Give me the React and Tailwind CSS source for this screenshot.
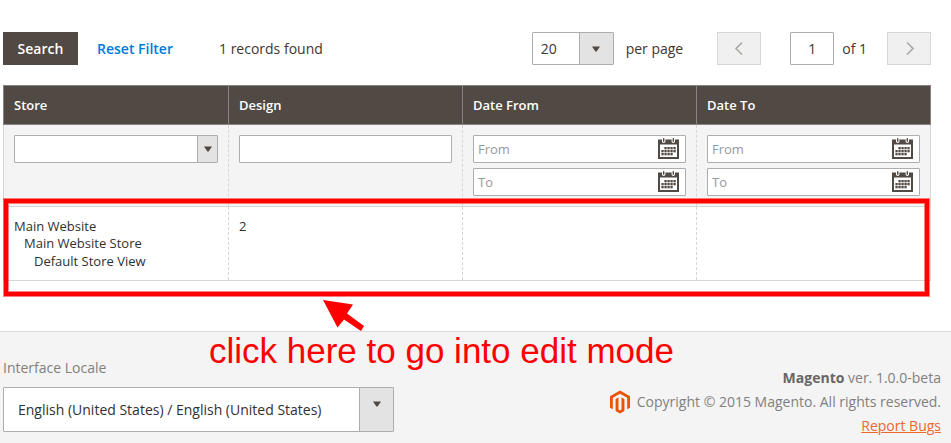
import React from "react";

const inputClass =
  "block h-7 w-full rounded-[1px] border border-[#adadad] bg-white px-1 text-[13px] text-[#303030] placeholder:text-[#999] outline-none";

function Triangle() {
  return (
    <svg className="h-[6px] w-2" viewBox="0 0 8 6" aria-hidden="true">
      <path d="M0 0.5h8L4.6 5.6H3.4z" fill="#514943" />
    </svg>
  );
}

function CalendarIcon() {
  const dots = [];
  for (let row = 0; row < 3; row++) {
    for (let col = 0; col < 5; col++) {
      if ((row === 0 && col === 0) || (row === 2 && col === 4)) continue;
      dots.push(<rect key={row + "-" + col} x={3.4 + col * 3} y={9 + row * 3} width="2.3" height="2.3" />);
    }
  }
  return (
    <svg className="h-[21px] w-[21px]" viewBox="0 0 21 21" fill="#514943" aria-hidden="true">
      <path fillRule="evenodd" d="M0 1.5h21V21H0zM2 6.5V19h17V6.5z" />
      <rect x="4" y="0" width="3.4" height="5" rx="1.7" fill="#fff" />
      <rect x="13.6" y="0" width="3.4" height="5" rx="1.7" fill="#fff" />
      <rect x="5" y="0" width="1.4" height="4" rx="0.7" />
      <rect x="14.6" y="0" width="1.4" height="4" rx="0.7" />
      {dots}
    </svg>
  );
}

function DateField({ label, name }) {
  return (
    <div className="relative">
      <input type="text" placeholder={label} aria-label={name + " " + label} className={inputClass} />
      <button type="button" aria-label={"Pick " + name + " " + label} className="absolute right-[7px] top-[3px]">
        <CalendarIcon />
      </button>
    </div>
  );
}

function Chevron({ d }) {
  return (
    <svg className="h-4 w-4" viewBox="0 0 16 16" fill="none" stroke="#aaa6a2" strokeWidth="1.6" aria-hidden="true">
      <path d={d} />
    </svg>
  );
}

function MagentoLogo() {
  return (
    <svg className="h-6 w-5 shrink-0" viewBox="0 0 20 24" fill="#eb5202" aria-hidden="true">
      <path d="M10 0.5 20 6.2v11.5l-2.8 1.6V7.8L10 3.7 2.8 7.8v11.5L0 17.7V6.2z" />
      <path d="M5.6 9.1 8.5 7.5v12L10 20.4l1.5-0.9v-12l2.9 1.6v11.8L10 23.5l-4.4-2.6z" />
    </svg>
  );
}

const headClass = "h-[39px] border border-[#8a837f] bg-[#514943] px-[10px] text-left font-semibold text-white";
const filterClass =
  "border-x border-dashed border-[#d6d6d6] bg-[#f4f4f4] p-[10px] align-top first:[border-left-style:solid] last:[border-right-style:solid]";
const cellClass =
  "h-[74px] border border-[#d6d6d6] [border-left-style:dashed] [border-right-style:dashed] px-[10px] pt-[10px] align-top first:[border-left-style:solid] last:[border-right-style:solid]";

export default function App() {
  return (
    <div className="flex min-h-screen flex-col bg-white font-['Open_Sans','Noto_Sans',sans-serif] text-sm text-[#41362f]">
      <main className="pb-[50px] pl-[3px] pr-5 pt-8">
        <div className="mb-5 flex h-[33px] items-center justify-between">
          <div className="flex items-center">
            <button type="button" className="h-[33px] w-[75px] bg-[#514943] font-semibold text-white">
              Search
            </button>
            <button type="button" className="ml-[19px] font-semibold text-[#007bdb]">
              Reset Filter
            </button>
            <span className="ml-[46px]">1 records found</span>
          </div>
          <div className="flex items-center">
            <div className="relative">
              <select
                id="limit"
                className="block h-[33px] w-[82px] appearance-none rounded-[1px] border border-[#adadad] bg-white pl-2 outline-none"
              >
                <option>20</option>
              </select>
              <span className="pointer-events-none absolute inset-y-px right-px flex w-[34px] items-center justify-center border-l border-[#adadad] bg-[#e3e3e3]">
                <Triangle />
              </span>
            </div>
            <label htmlFor="limit" className="ml-3">
              per page
            </label>
            <button
              type="button"
              aria-label="Previous page"
              className="ml-[34px] flex h-[33px] w-11 items-center justify-center border border-[#d6d6d6] bg-[#f0f0f0]"
            >
              <Chevron d="M11 1.5 5 7.5l6 6" />
            </button>
            <input
              id="page"
              type="text"
              defaultValue="1"
              className="ml-[29px] h-[33px] w-11 rounded-[1px] border border-[#adadad] bg-white text-center outline-none"
            />
            <label htmlFor="page" className="ml-2">
              of 1
            </label>
            <button
              type="button"
              aria-label="Next page"
              className="ml-5 flex h-[33px] w-11 items-center justify-center border border-[#d6d6d6] bg-[#f0f0f0]"
            >
              <Chevron d="M6 1.5l6 6-6 6" />
            </button>
          </div>
        </div>

        <div className="relative">
          <table className="w-full table-fixed border-collapse text-[13px] text-[#303030]">
            <colgroup>
              <col className="w-[225px]" />
              <col />
              <col />
              <col />
            </colgroup>
            <thead>
              <tr>
                <th className={headClass}>Store</th>
                <th className={headClass}>Design</th>
                <th className={headClass}>Date From</th>
                <th className={headClass}>Date To</th>
              </tr>
            </thead>
            <tbody>
              <tr>
                <td className={filterClass}>
                  <div className="relative">
                    <select aria-label="Store" className={inputClass + " appearance-none"}>
                      <option></option>
                    </select>
                    <span className="pointer-events-none absolute inset-y-px right-px flex w-5 items-center justify-center border-l border-[#adadad] bg-[#e3e3e3]">
                      <Triangle />
                    </span>
                  </div>
                </td>
                <td className={filterClass}>
                  <input type="text" aria-label="Design" className={inputClass} />
                </td>
                <td className={filterClass}>
                  <div className="flex flex-col gap-[5px]">
                    <DateField name="Date From" label="From" />
                    <DateField name="Date From" label="To" />
                  </div>
                </td>
                <td className={filterClass}>
                  <div className="flex flex-col gap-[5px]">
                    <DateField name="Date To" label="From" />
                    <DateField name="Date To" label="To" />
                  </div>
                </td>
              </tr>
              <tr>
                <td className={cellClass}>
                  <div className="leading-[18px]">Main Website</div>
                  <div className="pl-[10px] leading-[17px]">Main Website Store</div>
                  <div className="pl-5 leading-[18px]">Default Store View</div>
                </td>
                <td className={cellClass + " leading-[18px]"}>2</td>
                <td className={cellClass}></td>
                <td className={cellClass}></td>
              </tr>
            </tbody>
          </table>
          <div className="pointer-events-none absolute -bottom-[15px] left-px right-[2px] top-[114px] border-4 border-[#f00] ring-1 ring-[#ff000080] inset-ring inset-ring-[#ff000080]"></div>
        </div>
      </main>

      <footer className="relative flex flex-1 items-start justify-between border-t border-[#d9d9d9] bg-[#f4f4f4] pl-[3px] pr-[10px] text-[#808080]">
        <div className="pt-[26px]">
          <label htmlFor="locale" className="block leading-5">
            Interface Locale
          </label>
          <div className="relative mt-[9px]">
            <select
              id="locale"
              className="block h-[45px] w-[391px] appearance-none rounded-[1px] border border-[#adadad] bg-white pl-[14px] text-[#303030] outline-none"
            >
              <option>English (United States) / English (United States)</option>
            </select>
            <span className="pointer-events-none absolute inset-y-px right-px flex w-[34px] justify-center border-l border-[#adadad] bg-[#e3e3e3] pt-[13px]">
              <Triangle />
            </span>
          </div>
        </div>
        <div className="flex items-center gap-[7px] pt-[34px]">
          <MagentoLogo />
          <div className="text-right leading-6">
            <p>
              <strong className="font-bold text-[#666]">Magento</strong> ver. 1.0.0-beta
            </p>
            <p>Copyright © 2015 Magento. All rights reserved.</p>
            <a href="#bugs" className="block text-[#ef672f] underline">
              Report Bugs
            </a>
          </div>
        </div>

        <svg className="pointer-events-none absolute -top-8 left-[322px] h-8 w-[42px]" viewBox="0 0 42 32" fill="#f00" aria-hidden="true">
          <path d="M1 0 31 4.5 25 13.5 42 26 39 31 22 19.5 15.5 27.5z" />
        </svg>
        <p className="pointer-events-none absolute left-[209px] top-0 whitespace-nowrap font-['Liberation_Sans',Arial,sans-serif] text-[35px] leading-[38px] text-[#f00]">
          click here to go into edit mode
        </p>
      </footer>
    </div>
  );
}
